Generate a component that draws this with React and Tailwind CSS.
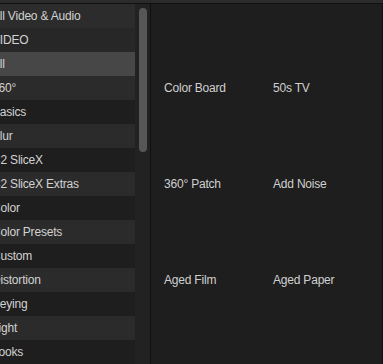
import React from "react";

const rows = [
  { t: "All Video & Audio", bg: "bg-[#2c2c2c]" },
  { t: "VIDEO", bg: "bg-[#272727]" },
  { t: "All", bg: "bg-[#474747]" },
  { t: "360°", bg: "bg-[#2b2b2b]" },
  { t: "Basics", bg: "bg-[#1e1e1e]" },
  { t: "Blur", bg: "bg-[#2b2b2b]" },
  { t: "C2 SliceX", bg: "bg-[#1e1e1e]" },
  { t: "C2 SliceX Extras", bg: "bg-[#2b2b2b]" },
  { t: "Color", bg: "bg-[#1e1e1e]" },
  { t: "Color Presets", bg: "bg-[#2b2b2b]" },
  { t: "Custom", bg: "bg-[#1e1e1e]" },
  { t: "Distortion", bg: "bg-[#2b2b2b]" },
  { t: "Keying", bg: "bg-[#1e1e1e]" },
  { t: "Light", bg: "bg-[#2b2b2b]" },
  { t: "Looks", bg: "bg-[#1e1e1e]" },
];

const items = [
  "Color Board",
  "50s TV",
  "360° Patch",
  "Add Noise",
  "Aged Film",
  "Aged Paper",
];

export default function App() {
  return (
    <div
      className="w-[383px] h-[364px] overflow-hidden bg-[#1e1e1e] flex flex-col text-[12px] tracking-[-0.2px]"
      style={{ fontFamily: '"Liberation Sans", Arial, sans-serif' }}
    >
      <div className="h-[3px] bg-[#2b2b2b] shrink-0" />
      <div className="h-[1px] bg-[#101010] shrink-0" />
      <div className="flex flex-1 min-h-0">
        <div className="w-[135px] shrink-0 overflow-hidden flex flex-col">
          {rows.map((r, i) => (
            <div
              key={i}
              className={`h-[24px] shrink-0 flex items-center ${r.bg} text-[#d2d2d2] whitespace-nowrap`}
            >
              <span className="ml-[-8px]">{r.t}</span>
            </div>
          ))}
        </div>
        <div className="w-[15px] shrink-0 bg-[#222222] pt-[4px] pl-[4px]">
          <div className="w-[8px] h-[144px] rounded-full bg-[#575757]" />
        </div>
        <div className="w-[1px] shrink-0 bg-[#101010]" />
        <div className="flex-1 bg-[#1e1e1e] pl-[13px] pt-[4px]">
          <div className="grid grid-cols-[109px_109px]">
            {items.map((it, i) => (
              <div key={i} className="h-[96px] flex flex-col">
                <div className="h-[72px] shrink-0" />
                <div className="h-[16px] flex items-center text-[#d0d0d0] whitespace-nowrap">
                  {it}
                </div>
              </div>
            ))}
          </div>
        </div>
        <div className="w-[1px] shrink-0 bg-[#101010]" />
        <div className="w-[7px] shrink-0 bg-[#222222] pt-[2px] pl-[2px] overflow-hidden">
          <div className="w-[10px] h-[18px] rounded-[4px] bg-[#575757]" />
        </div>
      </div>
    </div>
  );
}
